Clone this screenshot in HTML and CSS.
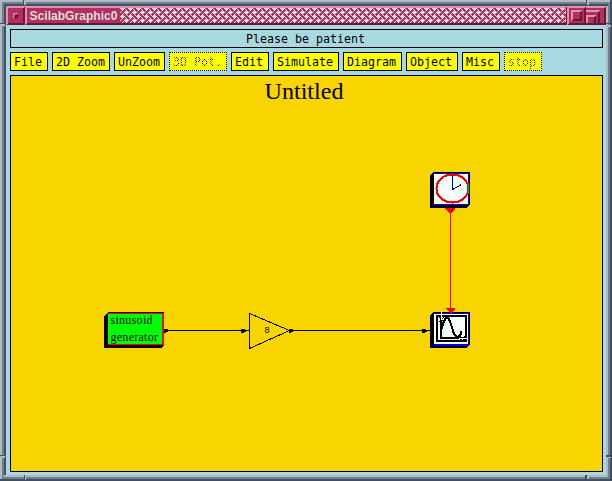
FILE: index.html
```html
<!DOCTYPE html>
<html lang="en">
<head>
<meta charset="utf-8">
<title>ScilabGraphic0</title>
<link rel="stylesheet" href="styles.css">
</head>
<body>
<div class="window">
  <header class="titlebar">
    <div class="tbutton"><svg width="19" height="19" shape-rendering="crispEdges"><path fill="#681830" d="M0 17h19v2H0zM17 0h2v19h-2z"/><path fill="#e090b0" d="M0 0h19L17 2H2v15L0 19zM7 7h5v1H8v4H7z"/><path fill="#681830" d="M12 7v5H7l5-5z"/></svg></div>
    <div class="caption"><svg width="542" height="19" shape-rendering="crispEdges">
      <defs><pattern id="weave" x="95" y="2" width="8" height="8" patternUnits="userSpaceOnUse"><rect width="8" height="8" fill="#b03060"/><path fill="#dcdcdc" d="M0 0h5v1H0zM1 1h3v1H1zM5 1h1v1H5zM2 2h1v1H2zM6 2h1v1H6zM1 3h1v1H1zM5 3h3v1H5zM0 4h1v1H0zM4 4h4v1H4zM3 5h1v1H3zM5 5h3v1H5zM2 6h1v1H2zM6 6h1v1H6zM1 7h3v1H1zM7 7h1v1H7z"/></pattern></defs>
      <path fill="#681830" d="M0 17h542v2H0zM540 0h2v19h-2z"/><path fill="#e090b0" d="M0 0h542l-2 2H2v15l-2 2z"/><rect x="95" y="2" width="446" height="15" fill="url(#weave)"/>
      <text class="name" x="4.500" y="13.500" textLength="88" lengthAdjust="spacingAndGlyphs">ScilabGraphic0</text>
    </svg></div>
    <div class="tbutton"><svg width="19" height="19" shape-rendering="crispEdges"><path fill="#681830" d="M0 17h19v2H0zM17 0h2v19h-2zM13 4h2v11H4v-2h9z"/><path fill="#e090b0" d="M0 0h19L17 2H2v15L0 19zM4 4h11l-2 2H6v7l-2 2z"/></svg></div>
    <div class="tbutton last"><svg width="20" height="19" shape-rendering="crispEdges"><path fill="#681830" d="M0 17h20v2H0zM18 0h2v19h-2zM12 4h2v13h-2zM8 10h2v7H8z"/><path fill="#e090b0" d="M0 0h20l-2 2H0zM0 4h14l-2 2H0zM0 9h10l-2 2H2v6H0z"/></svg></div>
  </header>
  <main class="content">
    <div class="status">Please be patient</div>
    <nav class="menu">
      <span class="item w4">File</span><span class="item w7s">2D Zoom</span><span class="item w6s">UnZoom</span><span class="item w7s off"><span class="stipple">3D Pot.</span></span><span class="item w4">Edit</span><span class="item w8">Simulate</span><span class="item w7">Diagram</span><span class="item w6">Object</span><span class="item w4">Misc</span><span class="item w4 off"><span class="stipple">stop</span></span>
    </nav>
    <svg class="canvas" viewBox="10 75 593 397" width="593" height="397" shape-rendering="crispEdges">
      <rect x="10" y="75" width="593" height="397" fill="#000"/><rect x="11" y="76" width="591" height="395" fill="#f8d400"/>
      <text class="heading" x="264.5" y="99" textLength="79" lengthAdjust="spacingAndGlyphs">Untitled</text>

      <g id="generator">
        <path d="M108 312h56v33l-3 3h-57v-32z"/><rect x="108" y="313" width="55" height="32" fill="#f00"/><rect x="108" y="314" width="54" height="30" fill="#0f0"/><path fill="#f00" d="M163 313h1v33h-1z"/>
        <text class="label" x="110.5" y="324" textLength="42">sinusoid</text>
        <text class="label" x="110.5" y="341" textLength="47.500">generator</text>
      </g>
      <path d="M164 330h85v1h-85zM164 329h4v1h1v1h-1v1h-2v1h-2zM241 329h4v1h3v1h-2v1h-2v1h-3z"/>
      <path d="M249.500 313.500V348.500L289.500 330.500z" fill="none" stroke="#000"/>
      <text class="gain" x="264.500" y="333">8</text>
      <path d="M290 330h140v1H290zM289 329h4v1h1v1h-1v1h-2v1h-2zM422 329h4v1h3v1h-2v1h-2v1h-3z"/>

      <g id="clock">
        <path d="M434 172h36v32l-3 4h-37v-33z"/><path fill="#0000e0" d="M434 173h35v32h-35z"/><path fill="#f5fffa" d="M434 174h34v30h-34z"/>
        <ellipse cx="452.500" cy="188.500" rx="16" ry="14" fill="none" stroke="#f00" stroke-width="2"/>
        <path fill="none" stroke="#0000a0" d="M452.500 174v15.500l9-5"/><path fill="#00c000" d="M468 183h1v11h-1zM452 173h1v1h-1z"/>
      </g>
      <path fill="#f00" d="M450 208h1v101h-1zM445 208h10v1l-4 4h-2l-4-4z"/>
      <g id="scope">
        <path d="M434 312h36v32l-3 4h-37v-33z"/><path fill="#0000e0" d="M434 313h35v33h-35z"/><path fill="#f5fffa" d="M434 314h34v30h-34z"/>
        <path fill="none" stroke="#000" stroke-width="2" d="M437 316h29v25h-29z"/><path fill="none" stroke="#000" stroke-width="2" d="M441 316v22H465"/>
        <path fill="none" stroke="#000" stroke-width="2" d="M441 331l3-10 2-3h2l2 3 4 13 3 3h1l3-3v-3"/>
        <path fill="none" stroke="#000" d="M439 317l5 5M439 322l5-5M459 336l7 5M460 340l6-4M466 338.500h4"/>
        <path fill="#f5fffa" d="M441 312h1v8h-1zM459 338h9v1h-9z"/>
      </g>
      <path fill="#f00" d="M446 308h9v1l-4 4h-1l-4-4z"/>
    </svg>
  </main>
  <svg class="frame" width="612" height="481" shape-rendering="crispEdges">
    <path fill="#b0b8c0" fill-rule="evenodd" d="M0 0h612v481H0zM6 6v469h600V6z"/>
    <path fill="#708090" d="M2 2h608v2H4v475H2zM608 4h2v475H4v-2h604z"/>
    <path fill="#405060" d="M4 4h604v2H6v469H4zM610 0h2v481H0v-2h610z"/>
    <path fill="#405060" d="M23 0h1v6h-1zM0 23h6v1H0zM586 0h1v6h-1zM606 23h6v1h-6zM0 455h6v1H0zM24 475h1v6h-1zM585 475h2v4h-2zM606 455h4v2h-4z"/>
    <path fill="#b0b8c0" d="M24 0h2v5h-2zM0 24h5v2H0zM587 0h2v5h-2zM606 25h5v2h-5zM0 456h5v2H0zM25 475h1v5h-1zM587 475h2v4h-2zM606 457h5v1h-5z"/>
  </svg>
</div>
</body>
</html>
```
FILE: styles.css
```css
body { margin: 0; }
svg { display: block; }
.window {
  position: relative;
  box-sizing: border-box;
  width: 612px;
  height: 481px;
  padding: 6px;
  overflow: hidden;
  background: #a8d8e0;
}
.frame {
  position: absolute;
  top: 0;
  left: 0;
  pointer-events: none;
}
.titlebar { display: flex; height: 19px; background: #b03060; }
.tbutton { width: 19px; }
.last { width: 20px; }
.caption { width: 542px; }
.name { font: bold 13px "Liberation Sans", sans-serif; fill: #dcdcdc; }
.content {
  display: flex;
  flex-direction: column;
  gap: 4px;
  padding: 4px 3px 0 4px;
}
.status {
  box-sizing: border-box;
  height: 19px;
  border: 1px solid #000;
  padding-right: 2px;
  text-align: center;
  font: 11.63px/19px "DejaVu Sans Mono", monospace;
}
.menu { display: flex; gap: 4px; height: 19px; }
.item {
  box-sizing: border-box;
  border: 1px solid #000;
  padding-left: 3px;
  background: #ff0;
  white-space: pre;
  font: 11.63px/18px "DejaVu Sans Mono", monospace;
}
.off { border-style: dotted; }
.stipple {
  background: repeating-conic-gradient(#000 0 25%, #ff0 0 50%) 0 0 / 2px 2px;
  -webkit-background-clip: text;
  background-clip: text;
  color: transparent;
}
.w4 { width: 38px; }
.w6s { width: 51px; }
.w6 { width: 52px; }
.w7s { width: 58px; }
.w7 { width: 59px; }
.w8 { width: 66px; }
.heading { font: 24px "Liberation Serif", serif; }
.label { font: 12px "Liberation Serif", serif; }
.gain { font: 9px "Liberation Sans", sans-serif; }
```
